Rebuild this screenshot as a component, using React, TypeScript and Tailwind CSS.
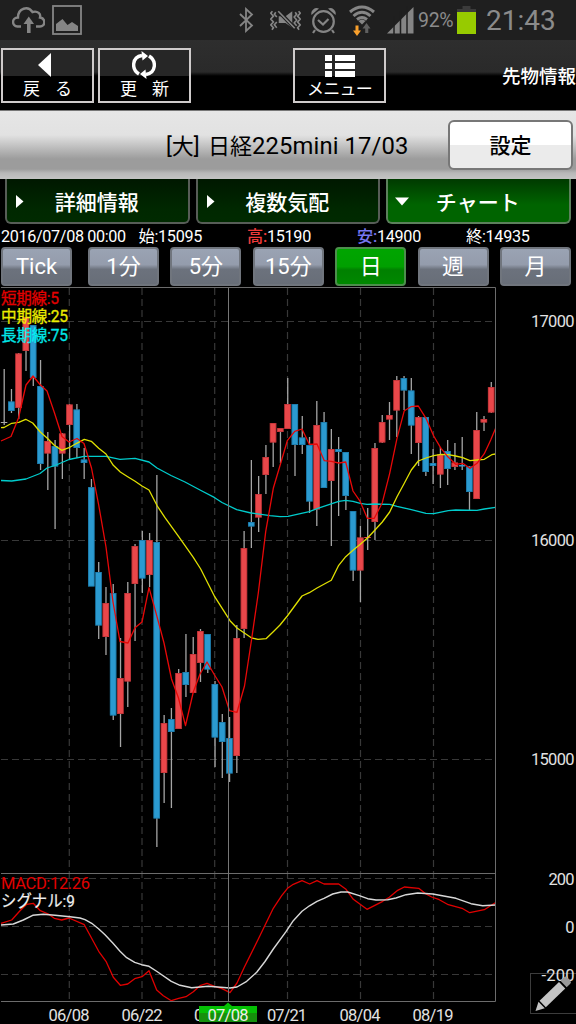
// ── FuturesChartPage ──────────────────────────────────────────────────────────
// Mobile futures screen: status bar, toolbar, tabs, period buttons
// and a daily candle chart with a MACD pane under it.

import type { ReactNode } from 'react';

const FONT = "font-['Roboto','Noto_Sans_CJK_JP',sans-serif]";

// up/down, body top, body bottom, wick top, wick bottom
type Candle = ['u' | 'd' | 'n', number, number, number, number];

const CANDLES: Candle[] = [
  ['n', 422, 423, 369, 425],
  ['d', 401.5, 411, 389, 413],
  ['u', 353.5, 408, 353, 419],
  ['u', 317, 351, 317, 371],
  ['d', 325, 378, 325, 386],
  ['d', 386, 464, 360, 470],
  ['u', 441, 453.5, 432, 490],
  ['d', 446, 466.5, 440, 529],
  ['u', 433.5, 453.5, 433, 479],
  ['u', 404.5, 425, 404, 459],
  ['d', 409.5, 448, 404, 458],
  ['d', 459.5, 463, 448, 479],
  ['d', 487, 586.5, 479, 586],
  ['d', 572, 625.5, 562, 639],
  ['u', 603, 637, 587, 655],
  ['d', 593, 715.5, 584, 720],
  ['u', 678, 714, 638, 747],
  ['u', 593, 681.5, 582, 707],
  ['u', 546, 584, 544, 641],
  ['d', 540, 578.5, 531, 593],
  ['u', 540, 575, 533, 587],
  ['d', 542, 818.5, 475, 847],
  ['u', 723, 773, 715, 803],
  ['d', 719, 732, 708, 808],
  ['u', 673, 729, 669, 729],
  ['d', 672, 685, 634, 697],
  ['u', 654, 693, 637, 693],
  ['u', 631, 663, 629, 682],
  ['d', 634, 669.5, 634, 673],
  ['d', 684, 737.5, 681, 767],
  ['d', 722, 742, 714, 778],
  ['d', 738, 773.5, 717, 782],
  ['u', 638, 756, 625, 773],
  ['u', 548, 629, 531, 638],
  ['d', 522, 526.5, 460, 548],
  ['u', 494, 517.5, 476, 532],
  ['u', 457, 475, 445, 494],
  ['u', 423, 442.5, 423, 467],
  ['u', 428, 432, 428, 463],
  ['u', 404, 429, 378, 429],
  ['d', 404, 445, 404, 476],
  ['d', 437.5, 445, 416, 454],
  ['d', 445, 501.5, 437, 513],
  ['u', 425, 509.5, 401, 526],
  ['d', 422, 488, 412, 488],
  ['u', 449, 481, 429, 546],
  ['d', 449, 452, 437, 516],
  ['d', 452, 496, 452, 510],
  ['d', 511, 570.5, 511, 581],
  ['u', 537.5, 570.5, 526, 602],
  ['u', 537, 538, 508, 550],
  ['u', 448, 522, 443, 540],
  ['u', 422, 442.5, 415, 443],
  ['u', 415, 419.5, 402, 440],
  ['u', 380, 410.5, 376, 437],
  ['d', 378, 390.5, 376, 410],
  ['d', 390.5, 425.5, 378, 454],
  ['u', 417, 443, 416, 466],
  ['d', 417, 472, 417, 476],
  ['d', 463, 466, 449, 484],
  ['u', 454.5, 474.5, 447, 488],
  ['d', 451, 469, 440, 485],
  ['u', 462.5, 467, 443, 470],
  ['d', 465, 466.5, 437, 470],
  ['d', 466.5, 492, 466, 511],
  ['u', 430, 499, 412, 499],
  ['u', 419, 422.5, 416, 431],
  ['u', 387, 412.5, 382, 413],
];

const FILL = { u: '#e9474a', d: '#2b9ad0', n: '#a8a8a8' };
const EDGE = { u: '#a8282c', d: '#13658f', n: '#a8a8a8' };

const MA5 =
  '1,441 11,436.5 18.5,418 26,385 33,376 40,384.5 47,391 54.5,413 62,436.5 69,442 77,438.5 84,443.5 91.5,468 98.7,505 106,547 113,602 120,641.5 128,643 135,627.7 142,622 149,587.7 157,616.7 164,643 171.5,679 178.5,698 185.5,725.7 193.3,692 200,674 207,662 214.5,675 222,687 229.5,710.7 237,712.3 244.5,686 251.5,640 258.3,593 265.7,531.7 273.3,488.3 280.7,463.3 287.3,440.7 294.7,431.3 302,429 309.3,444.3 317,444 324.3,460.7 331.3,461.3 338.7,463 345.7,462 353,491 360.3,501.7 367.3,518.3 374.3,518.3 382.3,502.7 389.7,473.3 397,438.3 404.3,410.7 411,406.7 418.3,406 426,418.3 433.7,436 441,448.3 448.3,457.3 455.7,464.3 462.7,463.3 470,468.3 477,463.3 484.3,453.7 490.7,440 495.5,428.5';

const MA25 =
  '1,427.7 4,427.5 11.7,423.3 18.7,422.3 25.7,419.3 32.7,423 40.3,432 47.3,438.3 54.3,445.3 61.7,450.3 69,447.7 76.7,443.3 84.3,439.3 91.3,441.3 98.7,448.3 106,454 113.3,465.3 120.3,472 127.7,476.7 134.7,481 142,486 149,490 157.3,506 165,517.7 178.7,536.7 193.3,557.3 200.7,569 214.7,596.7 230,620.7 237,628 251.7,638 258,639.3 266,638.7 273,632 280,625 287.3,616 302,596 309.3,592.7 317,588 331.3,580.3 338.7,565.3 345.7,556.7 353,550.3 360.3,544.3 367.5,538 374.3,530.7 382.3,522 389.7,512 397,496.7 404.3,483.3 411.3,470 418.3,461 426,458 433.7,455.7 441,454.3 448.3,454.7 455.7,456 462.7,457.7 470,460.7 477,460 484.3,459.3 491.7,454.7 495.5,454';

const MA75 =
  '1,480.5 11.7,481 26,479 40,473.5 47,468 55,465.5 62,462.5 69,459.5 84,456.3 106,456.3 120,459.3 135,458.3 149,462 157,468 171,475.5 185,482 200,490 214.7,497.7 222,502.5 236.7,509.7 251,513 270,515.7 280,516.7 288,516.3 309.3,511.7 317,508.7 338.7,501.3 345.7,500.3 353,501.3 360.3,503.3 367,504.3 374.3,504 389.7,504.3 397,506.3 411.3,509.7 426,513.3 433.7,513.7 448.3,510.7 455.7,510 477,510.3 484.3,509 495.5,507.3';

const MACD =
  '1,923.3 11.7,920 20,910.7 26.7,904.3 33.3,903.3 40.3,910.7 48.3,914 54.3,918.3 61.7,920 69,918 84.3,924.7 98.7,951.3 106,961.3 113.3,977.3 120.3,985.3 127.7,984 134.7,978.7 142,976.7 149,970.7 156.7,990 163.3,995.7 171.3,1000.7 178.7,998.3 186,996.7 193.3,991.7 200,985.7 207,983.3 214.7,986.3 222,988.7 230,992.7 237,983 244.3,967.3 258.7,938.3 273.3,908.3 281.7,895.7 287.5,888.3 293.3,884.3 302,880.7 309.7,884 317,880.7 324,884 338.7,884 346,889.3 353.3,899.3 367,909.3 382.7,901.3 389.3,897.3 397.7,890.3 404.3,887 418.7,888.3 426,894 431.7,897 439.3,899.7 448.3,904.7 462,908.3 469.7,912.7 484.3,909.7 495.3,902.7';

const SIGNAL =
  '1,925 13.3,924 23.3,920 32.7,915.3 43.3,914.3 55,915.3 70,916.7 80,918 85,919.7 91.7,923.3 98.5,928.7 105,934.7 113,943.3 120,951.3 126.7,957.7 134.7,962.3 141.7,964.7 149,966.3 157,971.5 171.3,981.3 180,985.3 191.7,987.7 208.3,986.3 230,988 237,987 246.7,981.3 256.7,972.3 265,961.5 273.3,949 286,931.7 293.3,920.7 302,911.3 309.5,905.8 317,901.3 324,898.3 332.7,894 341,892 347.7,892 359.3,895.7 367.7,898.7 376,900 387.7,899.7 396,898 406,894.7 417.7,893 432.7,894 456,898.3 471,903.7 482.7,905.7 495.3,905';

const GRID_X = [69.3, 142, 214.7, 287.5, 360.5, 433.5];
const GRID_Y = [321.5, 540.5, 759.5, 878.5, 926.5, 974.5];

function StatusBar() {
  return (
    <div className="flex h-10 items-center bg-[#1f1f1f] text-[#8b8b8b]">
      <svg className="ml-3 h-[26px] w-[33px] shrink-0" viewBox="0 0 33 26" fill="none" stroke="#858585" strokeWidth="2.4">
        <path d="M9 19.5H5.5C-.5 19-.5 10.500 6 10.500C6 1 16-1.500 20.500 5C26 3.500 29 7 28 10.500C34 11.500 33.500 19.500 28 19.500H24" />
        <path d="M16.800 26V15" strokeWidth="3.600" />
        <path d="M11.500 17L16.800 9.500L22 17Z" fill="#858585" stroke="none" />
      </svg>
      <svg className="ml-[7px] h-[30px] w-[30px] shrink-0" viewBox="0 0 30 30">
        <rect x="1" y="1" width="28" height="28" fill="none" stroke="#858585" strokeWidth="1.800" />
        <path d="M4 26V19L10.500 14L15.500 20L20 17L26 21V26Z" fill="#858585" />
      </svg>
      <svg className="ml-[156px] h-[26px] w-[16px] shrink-0" viewBox="0 0 16 26" fill="none" stroke="#858585" strokeWidth="1.800">
        <path d="M2 7L14 18.500L8 24V2L14 7.500L2 19" />
      </svg>
      <svg className="ml-[16px] h-[24px] w-[31px] shrink-0" viewBox="0 0 32 24" fill="none" stroke="#858585" strokeWidth="1.700">
        <path d="M2.500 3L.8 5L3.500 8L.8 11L3.500 14L.8 17L3.500 20L2 22M6 4L4.500 6L7 9M7 14L4.500 17L7 20M29.500 3L31.200 5L28.500 8L31.200 11L28.500 14L31.200 17L28.500 20L30 22M26 4L27.500 6L25 9L27.500 12L25 15L27.500 18" />
        <path d="M23 3V20L16 15H9V8H16Z" fill="#858585" stroke="none" />
        <path d="M8 2L26 21" stroke="#1f1f1f" strokeWidth="4" />
        <path d="M8.500 3L25.500 20.500" />
      </svg>
      <svg className="ml-[9px] h-[30px] w-[27px] shrink-0" viewBox="0 0 27 30" fill="none" stroke="#858585" strokeWidth="2.200">
        <circle cx="13.500" cy="16.500" r="10.300" />
        <path d="M8 15L13 19.500L18.500 14" />
        <path d="M5 25L3 28M22 25L24 28" />
        <path d="M1.500 10A5.500 5.500 0 0 1 9 3.500ZM25.500 10A5.500 5.500 0 0 0 18 3.500Z" fill="#858585" stroke="none" />
      </svg>
      <svg className="ml-[11px] h-[31px] w-[28px] shrink-0" viewBox="0 0 28 31" fill="none" stroke="#858585" strokeWidth="3">
        <path d="M2 7Q14-3 26 7M5.500 11Q14 3.500 22.500 11M9 14.500Q14 10.500 19 14.500" />
        <path d="M10.500 16Q14 13 17.500 16L14 19.500Z" fill="#858585" stroke="none" />
        <path d="M14.500 23.500L18.500 18L22.500 23.500H20.300V28H17.200V23.500Z" fill="#606060" stroke="none" />
        <path d="M7.500 20.500H10.500V25.500H13L9 31L5 25.500H7.500Z" fill="#f9a02c" stroke="none" />
      </svg>
      <svg className="ml-[11px] h-[28px] w-[28px] shrink-0" viewBox="0 0 28 28">
        <path d="M0 27.500L26.500 1V27.500Z" fill="#858585" />
        <path d="M7 10V28M13.500 5V28M20 0V28" stroke="#1f1f1f" strokeWidth="1.500" />
      </svg>
      <span className="ml-[3px] mt-px w-[39px] shrink-0 text-[19.500px] leading-6 tracking-[-0.300px]">92%</span>
      <svg className="h-[29px] w-[19px] shrink-0" viewBox="0 0 19 29">
        <path d="M5.500 0H13.500V3H19V8H0V3H5.500Z" fill="#3b3b3b" />
        <rect y="6" width="19" height="22" fill="#97cb00" />
      </svg>
      <span className="ml-[10px] mt-px text-[28px] leading-8">21:43</span>
    </div>
  );
}

function NavButton({ label, className, children }: { label: ReactNode; className: string; children: ReactNode }) {
  return (
    <button
      className={`flex h-[55px] w-[93px] flex-col items-center border-2 border-[#cfcbcb] bg-[linear-gradient(#262626_0px,#262626_26px,#000_26px)] text-white ${className}`}
    >
      <span className="flex h-[29px] items-center">{children}</span>
      <span className="whitespace-pre text-[17px] leading-[20px]">{label}</span>
    </button>
  );
}

function Toolbar() {
  return (
    <div className="flex h-[70px] items-start bg-[linear-gradient(#2e2e2e_0px,#2a2a2a_32px,#000_36px)] pt-2">
      <NavButton className="ml-px" label={<span className="flex gap-[15px]"><span>戻</span><span>る</span></span>}>
        <svg className="mr-1.5 h-6 w-[13px]" viewBox="0 0 13 24"><path d="M13 0V24L0 12Z" fill="#fff" /></svg>
      </NavButton>
      <NavButton className="ml-1" label={<span className="flex gap-[15px]"><span>更</span><span>新</span></span>}>
        <svg className="mr-0.5 mt-px h-7 w-6" viewBox="0 0 24 28" fill="none" stroke="#fff" strokeWidth="3.400">
          <path d="M7 23C-1 18 0 6 10 4.500M17 5C25 10 24 22 14 23.500" />
          <path d="M9.500 0L16 5L10.500 9.500ZM14.500 28L8 23L13.500 18.500Z" fill="#fff" stroke="none" />
        </svg>
      </NavButton>
      <NavButton className="ml-[102px]" label={<span className="tracking-[-0.700px]">メニュー</span>}>
        <svg className="mt-[3px] h-[22px] w-[30px]" viewBox="0 0 30 22" fill="#fff">
          <path d="M0 0h7v6H0zM10 0h20v6H10zM0 8h7v6H0zM10 8h20v6H10zM0 16h7v6H0zM10 16h20v6H10z" />
        </svg>
      </NavButton>
      <span className="ml-auto mt-[17px] whitespace-nowrap text-[18.500px] font-medium leading-6 text-white">先物情報</span>
    </div>
  );
}

function TitleBar() {
  return (
    <div className="flex h-[69px] items-start border-t border-[#777] bg-[linear-gradient(#e6e6e6_0px,#e2e2e2_24px,#9c9c9c_48px,#9c9c9c_58px,#b8b8b8_62px,#c4c4c4_68px)]">
      <h1 className="ml-[166px] mt-[21px] flex w-[282px] items-baseline whitespace-nowrap text-[22px] leading-7 text-black">
        <span className="w-[42px]">[大]</span>
        <span>日経</span>
        <span className="text-[23.800px] tracking-[0.120px]">225mini 17/03</span>
      </h1>
      <button className="mt-[9px] h-[50px] w-[125px] rounded-md border-2 border-[#777] bg-[linear-gradient(#fff_50%,#ebebeb_51%)] pt-[3px] text-[21px] font-medium text-black">
        設定
      </button>
    </div>
  );
}

function Tab({ label, active }: { label: string; active?: boolean }) {
  return (
    <button
      className={`flex h-[45px] w-[184.500px] items-center rounded-b-md border-2 border-t-0 text-[21px] font-medium text-white ${
        active
          ? 'border-[#5c805c] bg-[linear-gradient(#003a00,#006400_60%,#006400)]'
          : 'border-[#575d57] bg-[linear-gradient(#001800,#002800_70%,#002a00)]'
      }`}
    >
      <svg className="ml-[7px] mt-px h-[14px] w-[14px]" viewBox="0 0 14 14" fill="#fff">
        <path d={active ? 'M0 3.500H14L7 11.500Z' : 'M2 1V14L9.500 7.500Z'} />
      </svg>
      <span className="-ml-[22px] mt-[6px] flex-1">{label}</span>
    </button>
  );
}

function Quotes() {
  return (
    <div className="flex h-[23px] items-center whitespace-nowrap pl-px pt-[2px] text-[16.200px] leading-[23px] text-white">
      <span className="w-[137.500px] tracking-[-0.350px]">2016/07/08 00:00</span>
      <span className="w-[108.500px] tracking-[-0.280px]">始:15095</span>
      <span className="w-[110px] tracking-[-0.280px]"><b className="font-medium text-[#f03b3b]">高:</b>15190</span>
      <span className="w-[109px] tracking-[-0.280px]"><b className="font-medium text-[#7777f0]">安:</b>14900</span>
      <span className="tracking-[-0.280px]">終:14935</span>
    </div>
  );
}

function Periods() {
  return (
    <div className="flex h-[39px] items-start pl-px">
      {['Tick', '1分', '5分', '15分', '日', '週', '月'].map((p, i) => (
        <button
          key={p}
          className={`h-[39px] w-[71px] shrink-0 rounded border-2 pt-px text-[22px] leading-[34px] text-white ${
            i === 0 ? 'mr-4' : 'mr-[11.400px]'
          } ${
            p === '日'
              ? 'border-[#4c8f4c] bg-[linear-gradient(#00a500_0%,#00a000_50%,#008000_60%,#008800)]'
              : 'border-[#70757d] bg-[linear-gradient(#9aa3b3_0%,#949cac_45%,#6c727d_58%,#686e78)]'
          }`}
        >
          {p}
        </button>
      ))}
    </div>
  );
}

function Chart() {
  return (
    <svg className="block h-[738px] w-[576px]" viewBox="0 286 576 738" fill="none">
      <g stroke="#383838" strokeDasharray="7 4">
        {GRID_X.map(x => <path key={x} d={`M${x} 288V1001`} strokeWidth="1.200" />)}
        {GRID_Y.map(y => <path key={y} d={`M1 ${y}H495`} />)}
      </g>

      {CANDLES.map(([dir, top, bottom, high, low], i) => {
        const x = 4 + i * 7.27;
        return (
          <g key={i}>
            <path d={`M${x + 0.2} ${high}V${low}`} stroke="#a5a5a5" strokeWidth="1.300" />
            <rect x={x - 3.2} y={top} width="6.500" height={bottom - top} fill={FILL[dir]} />
            {bottom - top > 2 && (
              <rect x={x - 2.8} y={top + 0.4} width="5.700" height={bottom - top - 0.8} stroke={EDGE[dir]} strokeWidth="0.500" />
            )}
          </g>
        );
      })}

      {/* line legend, slightly see-through over the first candles */}
      <g fontSize="15.600" strokeWidth="0.300" opacity="0.950">
        <text x="1" y="303.500" fill="#f00000" stroke="#f00000" textLength="58">短期線:5</text>
        <text x="1" y="322" fill="#f8f800" stroke="#f8f800" textLength="67">中期線:25</text>
        <text x="1" y="340.500" fill="#00f4f4" stroke="#00f4f4" textLength="67">長期線:75</text>
      </g>

      <g strokeWidth="1.300" strokeLinejoin="round">
        <polyline points={MA75} stroke="#00cccc" />
        <polyline points={MA25} stroke="#e0e000" />
        <polyline points={MA5} stroke="#e80808" />
        <polyline points={MACD} stroke="#e00000" />
        <polyline points={SIGNAL} stroke="#d8d8d8" strokeWidth="1.400" />
      </g>

      {/* frame and cursor */}
      <path d="M1 287.500H495.500V1001.500H1M1 873.500H495.500" stroke="#6c6c6c" />
      <path d="M228.500 288V1001" stroke="#777" />

      <g fontSize="16.500">
        <text x="1" y="889" fill="#e00000" textLength="89">MACD:12.26</text>
        <text x="1" y="907" fill="#f0f0f0" stroke="#f0f0f0" strokeWidth="0.200" textLength="74" lengthAdjust="spacingAndGlyphs">シグナル:9</text>
      </g>

      <g fontSize="16.500" fill="#e2e2e2" textAnchor="end">
        <text x="574.500" y="326.500" textLength="43.500">17000</text>
        <text x="574.500" y="545.500" textLength="43.500">16000</text>
        <text x="574.500" y="764.500" textLength="43.500">15000</text>
        <text x="574.500" y="884.500" textLength="26">200</text>
        <text x="574.500" y="932.500">0</text>
      </g>

      <g fontSize="16.500" fill="#e2e2e2" textAnchor="middle">
        <text x="69" y="1021" textLength="41">06/08</text>
        <text x="142" y="1021" textLength="41">06/22</text>
        <text x="214.500" y="1021" textLength="41">07/06</text>
        <text x="287" y="1021" textLength="40">07/21</text>
        <text x="360" y="1021" textLength="41">08/04</text>
        <text x="433" y="1021" textLength="41">08/19</text>
      </g>
      {/* the cursor date covers the tick label next to it */}
      <path d="M199 1006H224L228 1002.500L232 1006H257V1014H199Z" fill="#04c004" />
      <rect x="199" y="1013" width="58" height="9" fill="#16900c" />
      <text x="228" y="1021" fontSize="16.500" fill="#f0f0e8" textAnchor="middle" textLength="41">07/08</text>

      {/* drawing tool button */}
      <rect x="530.500" y="973.500" width="46" height="40" stroke="#3c3c3c" />
      <text x="574.500" y="980.500" fontSize="16.500" fill="#e2e2e2" textAnchor="end" textLength="33">-200</text>
      <g transform="translate(535.500 1011) rotate(-44)" fill="#c4c4c4">
        <path d="M0 0L8.500-4.500V4.500Z" />
        <path d="M10-4.500H37V4.500H10Z" />
        <path d="M39-4.500H44Q46-4.500 46-2.500V2.500Q46 4.500 44 4.500H39Z" fill="#999" />
      </g>
    </svg>
  );
}

export default function App() {
  return (
    <div className={`h-[1024px] w-[576px] overflow-hidden bg-black ${FONT}`}>
      <StatusBar />
      <Toolbar />
      <TitleBar />
      <div className="flex gap-[6px] pl-[5px]">
        <Tab label="詳細情報" />
        <Tab label="複数気配" />
        <Tab label="チャート" active />
      </div>
      <Quotes />
      <Periods />
      <Chart />
    </div>
  );
}
